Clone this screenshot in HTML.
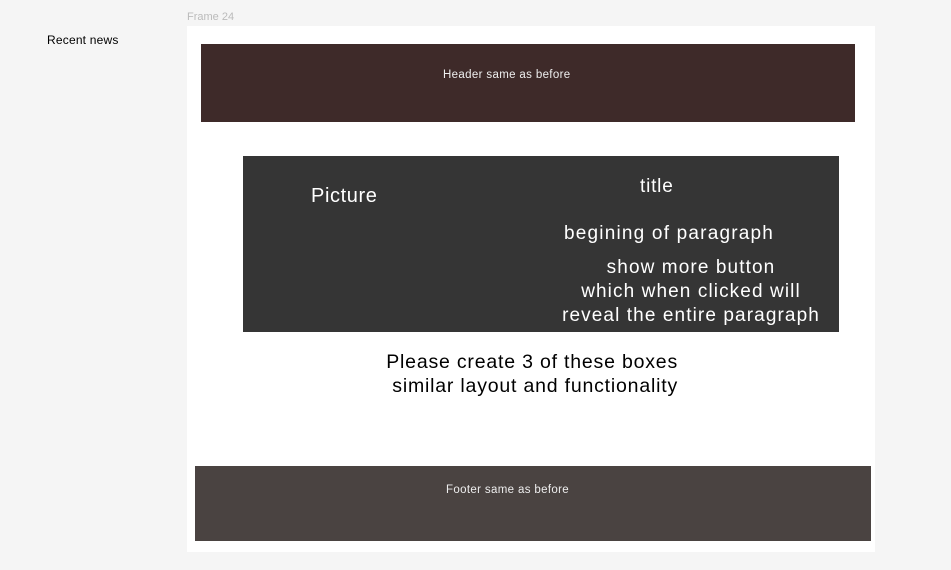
<!DOCTYPE html>
<html><head><style>
body{margin:0;width:951px;height:570px;background:#f5f5f5;position:relative;overflow:hidden;font-family:"Liberation Sans",sans-serif}
div{position:absolute}
.t{white-space:nowrap}
</style></head><body>
<div class="t" style="left:47px;top:33px;font-size:12px;color:#000;letter-spacing:0.2px">Recent news</div>
<div class="t" style="left:187px;top:11px;font-size:11px;color:#bbb">Frame 24</div>
<div style="left:187px;top:26px;width:688px;height:526px;background:#fff"></div>
<div style="left:201px;top:44px;width:654px;height:78px;background:#3e2a29"></div>
<div class="t" style="left:443px;top:69px;font-size:11.5px;color:#eee;letter-spacing:0.35px">Header same as before</div>
<div style="left:243px;top:156px;width:596px;height:176px;background:#353535"></div>
<div class="t" style="left:311px;top:185px;font-size:20px;color:#fff;letter-spacing:0.6px">Picture</div>
<div class="t" style="left:640px;top:176px;font-size:19px;color:#fff;letter-spacing:0.8px">title</div>
<div class="t" style="left:564px;top:223px;font-size:19px;color:#fff;letter-spacing:1.2px">begining of paragraph</div>
<div style="left:540px;top:256px;width:302px;text-align:center;font-size:19px;line-height:24px;color:#fff;letter-spacing:1.1px">show more button<br>which when clicked will<br>reveal the entire paragraph</div>
<div style="left:355px;top:350px;width:323px;text-align:right;font-size:19.5px;line-height:24px;color:#000;letter-spacing:0.8px">Please create 3 of these boxes<br>similar layout and functionality</div>
<div style="left:195px;top:466px;width:676px;height:75px;background:#4a4341"></div>
<div class="t" style="left:446px;top:484px;font-size:11.5px;color:#eee;letter-spacing:0.35px">Footer same as before</div>
</body></html>
